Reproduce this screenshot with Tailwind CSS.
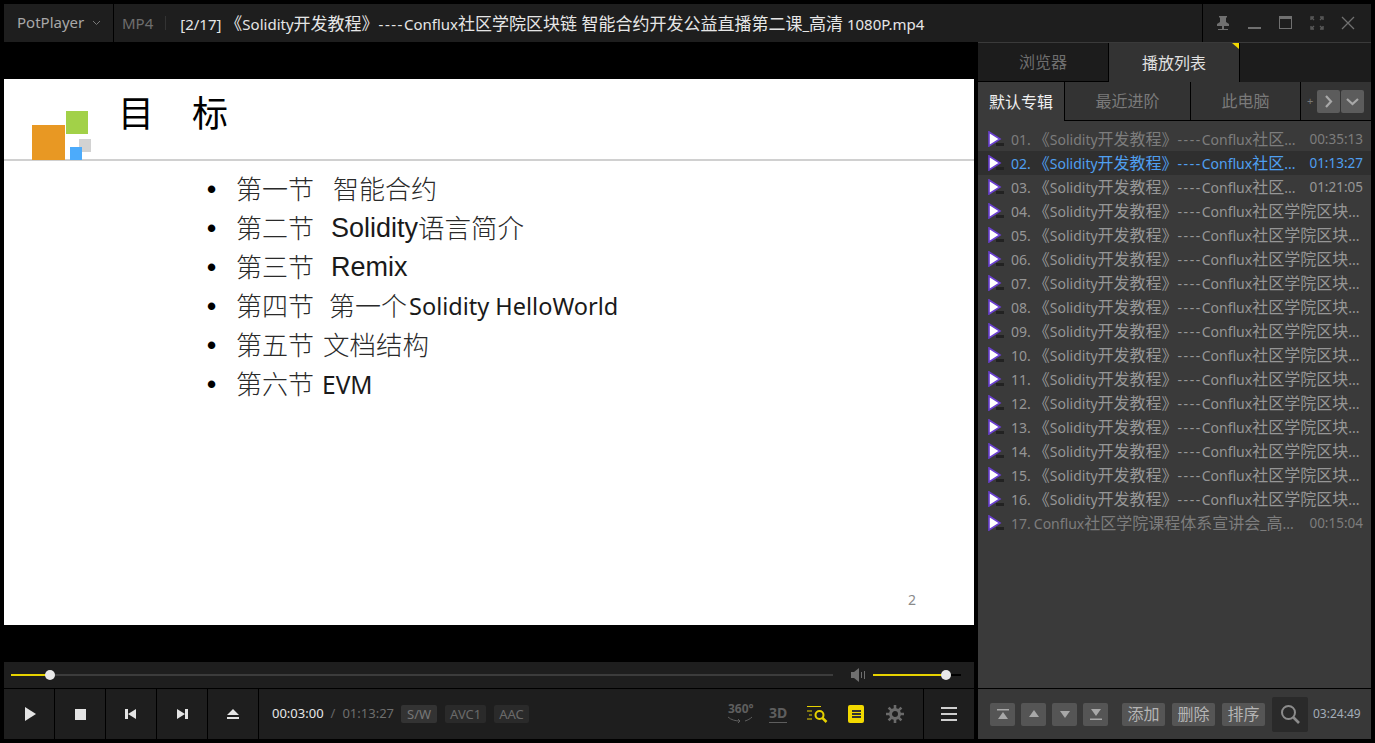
<!DOCTYPE html>
<html lang="zh-CN">
  <head>
    <meta charset="UTF-8" />
    <title>PotPlayer</title>
    <script src="https://cdn.jsdelivr.net/npm/@tailwindcss/browser@4"></script>
  </head>
  <body class="bg-black overflow-hidden font-['Noto_Sans','Noto_Sans_CJK_SC',sans-serif]">
    <div class="w-[1375px] h-[743px] bg-black p-[4px] flex flex-col">
      <!-- Title bar -->
      <header class="h-[38px] shrink-0 flex items-center bg-[#1e1e1e] w-[1367px]">
        <div class="w-[110px] h-full flex items-center pl-[13px] border-r border-black">
          <span class="mb-[2px] text-[15px] text-[#a8a8a8]">PotPlayer</span>
          <svg class="ml-[8px]" width="9" height="6" viewBox="0 0 9 6"><path d="M1 1l3.5 3.5L8 1" fill="none" stroke="#777" /></svg>
        </div>
        <span class="ml-[8px] text-[15px] text-[#6e6e6e]">MP4</span>
        <span class="ml-[12px] w-px h-[14px] bg-[#333]"></span>
        <span class="ml-[14px] mt-[2px] text-[15px] text-[#e6e6e6] whitespace-nowrap">[2/17] <span class="text-[17px]">《</span>Solidity<span class="text-[17px]">开发教程》</span><span class="tracking-[1.5px]">----</span>Conflux<span class="text-[17px]">社区学院区块链 智能合约开发公益直播第二课</span>_<span class="text-[17px]">高清</span> 1080P.mp4</span>
        <div class="ml-auto w-[169px] h-full flex items-center border-l border-black">
          <svg class="ml-[13px]" width="14" height="16" viewBox="0 0 14 16" fill="#707070"><path d="M3 1h8v1l-1 1v4l3 2v2H1V9l3-2V3L3 2zM6 11h2v3h4v1H2v-1h4z" /></svg>
          <svg class="ml-[18px]" width="14" height="16" viewBox="0 0 14 16" fill="#707070"><rect x="0" y="12" width="13" height="2" /></svg>
          <svg class="ml-[17px]" width="14" height="14" viewBox="0 0 14 14"><rect x=".5" y=".5" width="12" height="12" fill="none" stroke="#707070" /><rect x="0" y="0" width="13" height="3" fill="#707070" /></svg>
          <svg class="ml-[17px]" width="14" height="14" viewBox="0 0 14 14" fill="none" stroke="#5a5a5a" stroke-width="1.4"><path d="M1 4V1h3M10 1h3v3M13 10v3h-3M4 13H1v-3M2 2l2 2M12 2l-2 2M12 12l-2-2M2 12l2-2" /></svg>
          <svg class="ml-[17px]" width="14" height="14" viewBox="0 0 14 14" fill="none" stroke="#707070" stroke-width="1.3"><path d="M1 1l12 12M13 1L1 13" /></svg>
        </div>
      </header>

      <div class="flex h-[697px] w-[1367px]">
        <!-- Player -->
        <main class="w-[970px] shrink-0 flex flex-col">
          <div class="h-[620px] pt-[37px] bg-black">
            <div class="h-[546px] bg-white relative">
              <div class="h-[82px] border-b-2 border-[#d0d0d0] relative">
                <div class="absolute left-[28px] top-[46px] w-[33px] h-[35px] bg-[#e89823]"></div>
                <div class="absolute left-[62px] top-[32px] w-[22px] h-[23px] bg-[#a2d148]"></div>
                <div class="absolute left-[75px] top-[60px] w-[12px] h-[13px] bg-[#d2d2d2]"></div>
                <div class="absolute left-[66px] top-[68px] w-[12px] h-[13px] bg-[#4cabfb]"></div>
                <div class="absolute left-[114px] top-[9px] flex gap-[38px] text-[36px] leading-[52px] text-black"><span>目</span><span>标</span></div>
              </div>
              <ul class="pl-[203px] pt-[9px] text-[26px] leading-[39px] text-[#2a2a2a] font-light">
                <li class="flex"><span class="w-[29px] font-['Liberation_Sans'] font-bold text-black">•</span>第一节<span class="ml-[19px]">智能合约</span></li>
                <li class="flex"><span class="w-[29px] font-['Liberation_Sans'] font-bold text-black">•</span>第二节<span class="ml-[17px] font-['Liberation_Sans'] font-normal text-[27px] text-[#1a1a1a]">Solidity</span><span class="text-[26.5px]">语言简介</span></li>
                <li class="flex"><span class="w-[29px] font-['Liberation_Sans'] font-bold text-black">•</span>第三节<span class="ml-[17px] font-['Liberation_Sans'] font-normal text-[27px] text-[#1a1a1a]">Remix</span></li>
                <li class="flex"><span class="w-[29px] font-['Liberation_Sans'] font-bold text-black">•</span>第四节<span class="ml-[15px]">第一个</span><span class="ml-[2px] font-normal text-[23.5px] text-[#1a1a1a]">Solidity HelloWorld</span></li>
                <li class="flex"><span class="w-[29px] font-['Liberation_Sans'] font-bold text-black">•</span>第五节<span class="ml-[9px] text-[26.5px]">文档结构</span></li>
                <li class="flex"><span class="w-[29px] font-['Liberation_Sans'] font-bold text-black">•</span>第六节<span class="ml-[8px] font-normal text-[24.5px] text-[#1a1a1a]">EVM</span></li>
              </ul>
              <span class="absolute left-[904px] top-[510px] text-[14px] text-[#8a8a8a]">2</span>
            </div>
          </div>

          <!-- Seek bar -->
          <div class="h-[27px] bg-[#1e1e1e] flex items-center pl-[7px] pb-px border-b border-black">
            <div class="relative w-[822px] h-[2px] bg-[#3c3c3c]">
              <div class="absolute left-0 top-0 h-[2px] w-[40px] bg-[#e6d200]"></div>
              <div class="absolute left-[34px] top-[-4px] w-[10px] h-[10px] rounded-full bg-[#e8e8e8]"></div>
            </div>
            <svg class="ml-[18px]" width="15" height="14" viewBox="0 0 15 14" fill="#6f6f6f"><path d="M0 4h3l5-4v14l-5-4H0zM10 4h1v6h-1zM13 3h1v8h-1z" /></svg>
            <div class="relative ml-[7px] w-[88px] h-[2px] bg-black">
              <div class="absolute left-0 top-0 h-[2px] w-[73px] bg-[#e6d200]"></div>
              <div class="absolute left-[68px] top-[-4px] w-[10px] h-[10px] rounded-full bg-[#e8e8e8]"></div>
            </div>
          </div>

          <!-- Controls -->
          <div class="h-[50px] bg-[#1e1e1e] flex items-center">
            <div class="w-[51px] h-full flex items-center justify-center border-r border-black pl-[2px]">
              <svg width="12" height="14" viewBox="0 0 12 14" fill="#e4e4e4"><path d="M1 0l11 7-11 7z" /></svg>
            </div>
            <div class="w-[51px] h-full flex items-center justify-center border-r border-black">
              <div class="w-[11px] h-[11px] bg-[#e4e4e4]"></div>
            </div>
            <div class="w-[51px] h-full flex items-center justify-center border-r border-black">
              <svg width="12" height="12" viewBox="0 0 12 12" fill="#e4e4e4"><path d="M0 1h3v10H0zM3 6l8-5v10z" /></svg>
            </div>
            <div class="w-[51px] h-full flex items-center justify-center border-r border-black">
              <svg width="12" height="12" viewBox="0 0 12 12" fill="#e4e4e4"><path d="M12 1H9v10h3zM9 6L1 1v10z" /></svg>
            </div>
            <div class="w-[51px] h-full flex items-center justify-center border-r border-black">
              <svg width="12" height="12" viewBox="0 0 12 12" fill="#e4e4e4"><path d="M6 1l6 6H0zM0 9h12v2H0z" /></svg>
            </div>
            <span class="ml-[13px] text-[13px] text-[#e6e6e6]">00:03:00</span>
            <span class="ml-[7px] text-[13px] text-[#666]">/</span>
            <span class="ml-[7px] text-[13px] text-[#6e6e6e]">01:13:27</span>
            <span class="ml-[7px] px-[6px] h-[18px] leading-[18px] rounded-[2px] bg-[#333] text-[13px] text-[#777]">S/W</span>
            <span class="ml-[8px] px-[5px] h-[18px] leading-[18px] rounded-[2px] bg-[#2a2a2a] text-[13px] text-[#6a6a6a]">AVC1</span>
            <span class="ml-[8px] px-[5px] h-[18px] leading-[18px] rounded-[2px] bg-[#2a2a2a] text-[13px] text-[#6a6a6a]">AAC</span>
            <div class="ml-auto h-full flex items-center">
              <div class="relative w-[26px] h-[22px] mr-[16px]">
                <span class="absolute left-[1px] top-[-3px] text-[12px] font-bold text-[#5e5e5e]">360°</span>
                <svg class="absolute left-0 top-[13px]" width="26" height="9" viewBox="0 0 26 9" fill="none" stroke="#5e5e5e"><path d="M1 1c3 3 8 4 12 4l-2-2M13 5l-2 2M25 1c-2 2-4 3-7 4" /></svg>
              </div>
              <div class="w-[18px] mr-[19px] border-b border-[#5e5e5e] text-[14px] leading-[16px] font-bold text-[#5e5e5e] text-center pb-[1px]">3D</div>
              <svg class="mr-[20px]" width="22" height="18" viewBox="0 0 22 18" fill="none" stroke="#e6d200"><path d="M1 1.5h14M1 6h5M3 10h3M1 14h5" stroke-width="1.2" /><circle cx="13.5" cy="10" r="4" stroke-width="2" /><path d="M16.5 13l4 4" stroke-width="2.5" /></svg>
              <div class="w-[16px] h-[18px] mr-[22px] rounded-[2px] bg-[#f2d900] flex flex-col items-center justify-center gap-[1px]">
                <span class="w-[9px] h-[2px] bg-[#333]"></span><span class="w-[9px] h-[2px] bg-[#333]"></span><span class="w-[9px] h-[2px] bg-[#333]"></span>
              </div>
              <svg class="mr-[19px]" width="18" height="18" viewBox="0 0 18 18" fill="none" stroke="#6a6a6a"><circle cx="9" cy="9" r="4.5" stroke-width="3" /><path d="M9 0v4M9 14v4M0 9h4M14 9h4M2.6 2.6l2.8 2.8M12.6 12.6l2.8 2.8M15.4 2.6l-2.8 2.8M5.4 12.6l-2.8 2.8" stroke-width="2.6" /></svg>
              <div class="w-[51px] h-full border-l border-black flex flex-col items-center justify-center gap-[4px]">
                <span class="w-[16px] h-[2px] bg-[#cfcfcf]"></span><span class="w-[16px] h-[2px] bg-[#cfcfcf]"></span><span class="w-[16px] h-[2px] bg-[#cfcfcf]"></span>
              </div>
            </div>
          </div>
        </main>

        <!-- Side panel -->
        <aside class="ml-[4px] w-[393px] flex flex-col bg-[#3a3a3a]">
          <div class="mt-px h-[39px] shrink-0 flex bg-[#1c1c1c] text-[16px]">
            <div class="w-[131px] flex items-center justify-center border-r border-b border-black text-[#6e6e6e]">浏览器</div>
            <div class="relative w-[131px] flex items-center justify-center bg-[#333] border-r border-black text-[#e0e0e0]">
              播放列表
              <svg class="absolute right-0 top-0" width="7" height="6" viewBox="0 0 7 6" fill="#f2d900"><path d="M0 0h7v6z" /></svg>
            </div>
            <div class="flex-1"></div>
          </div>
          <div class="h-[39px] shrink-0 flex items-center bg-[#333] text-[16px]">
            <div class="w-[87px] h-full flex items-center justify-center border-r border-black bg-[#3a3a3a] text-[#f0f0f0]">默认专辑</div>
            <div class="w-[126px] h-full flex items-center justify-center border-r border-b border-black text-[#7a7a7a]">最近进阶</div>
            <div class="w-[110px] h-full flex items-center justify-center border-r border-b border-black text-[#7a7a7a]">此电脑</div>
            <div class="flex-1 h-full flex items-center border-b border-black pl-[6px]">
              <span class="text-[11px] text-[#777]">+</span>
              <div class="ml-[4px] w-[23px] h-[23px] rounded-[2px] bg-[#5c5c5c] flex items-center justify-center">
                <svg width="9" height="13" viewBox="0 0 9 13" fill="none" stroke="#a8a8a8" stroke-width="2.2"><path d="M2 1l5 5.5L2 12" /></svg>
              </div>
              <div class="ml-px w-[23px] h-[23px] rounded-[2px] bg-[#5c5c5c] flex items-center justify-center">
                <svg width="13" height="9" viewBox="0 0 13 9" fill="none" stroke="#a8a8a8" stroke-width="2.2"><path d="M1 2l5.5 5L12 2" /></svg>
              </div>
            </div>
          </div>

          <div id="list" class="flex-1 pt-[6px]"></div>

          <div class="h-px shrink-0 bg-black"></div>
          <!-- Playlist toolbar -->
          <div class="h-[50px] shrink-0 flex items-center pl-[12px] bg-[#383838]">
            <div class="w-[25px] h-[23px] rounded-[2px] bg-[#555] flex items-center justify-center">
              <svg width="12" height="11" viewBox="0 0 12 11" fill="#a8a8a8"><path d="M0 0h12v1.5H0zM6 3l5 7H1z" /></svg>
            </div>
            <div class="ml-[6px] w-[25px] h-[23px] rounded-[2px] bg-[#555] flex items-center justify-center">
              <svg width="12" height="8" viewBox="0 0 12 8" fill="#a8a8a8"><path d="M6 0l5 7H1z" /></svg>
            </div>
            <div class="ml-[6px] w-[25px] h-[23px] rounded-[2px] bg-[#555] flex items-center justify-center">
              <svg width="12" height="8" viewBox="0 0 12 8" fill="#a8a8a8"><path d="M6 8L1 1h10z" /></svg>
            </div>
            <div class="ml-[6px] w-[25px] h-[23px] rounded-[2px] bg-[#555] flex items-center justify-center">
              <svg width="12" height="11" viewBox="0 0 12 11" fill="#a8a8a8"><path d="M1 0h10L6 7zM0 9.5h12V11H0z" /></svg>
            </div>
            <div class="ml-[14px] w-[43px] h-[23px] rounded-[2px] bg-[#555] text-center text-[16px] leading-[23px] text-[#b4b4b4]">添加</div>
            <div class="ml-[7px] w-[43px] h-[23px] rounded-[2px] bg-[#555] text-center text-[16px] leading-[23px] text-[#b4b4b4]">删除</div>
            <div class="ml-[7px] w-[43px] h-[23px] rounded-[2px] bg-[#555] text-center text-[16px] leading-[23px] text-[#b4b4b4]">排序</div>
            <div class="ml-[7px] w-[36px] h-[35px] rounded-[2px] bg-[#2a2a2a] flex items-center justify-center">
              <svg width="20" height="20" viewBox="0 0 20 20" fill="none" stroke="#8c8c8c"><circle cx="8.5" cy="8.5" r="6.5" stroke-width="2" /><path d="M13 13l6 6" stroke-width="2.6" /></svg>
            </div>
            <span class="ml-[5px] text-[12px] text-[#a3adb8]">03:24:49</span>
          </div>
        </aside>
      </div>
    </div>

    <script>
      // CJK runs are set larger than the latin text in the playlist
      function wrapCjk(text) {
        return text
          .replace(/[\u3000-\u9fff]+/g, (run) => `<span class="text-[16px]">${run}</span>`)
          .replace("----", `<span class="tracking-[1.5px]">----</span>`);
      }

      const base = "《Solidity开发教程》----Conflux社区";
      const rows = [
        { n: "01.", t: base + "...", time: "00:35:13", cls: "text-[#7d7d7d]" },
        { n: "02.", t: base + "...", time: "01:13:27", cls: "text-[#4f9ff0] bg-[#2f2f2f]" },
        { n: "03.", t: base + "...", time: "01:21:05", cls: "text-[#969696]" },
      ];
      for (let i = 4; i <= 16; i++) {
        rows.push({ n: String(i).padStart(2, "0") + ".", t: base + "学院区块...", time: "", cls: "text-[#969696]" });
      }
      rows.push({ n: "17.", t: "Conflux社区学院课程体系宣讲会_高...", time: "00:15:04", cls: "text-[#7d7d7d]" });

      document.getElementById("list").innerHTML = rows
        .map(
          (row) => `
          <div class="h-[24px] flex items-center pl-[10px] pr-[8px] text-[14px] whitespace-nowrap ${row.cls}">
            <svg width="16" height="16" viewBox="0 0 16 16" class="shrink-0">
              <path d="M1 1l11 7-11 7z" fill="#fff" stroke="#6a3fd0" stroke-width="1.6" />
              <rect x="8" y="12" width="8" height="3" fill="#222" />
            </svg>
            <span class="ml-[7px]">${row.n}</span>
            <span class="ml-[3px]">${wrapCjk(row.t)}</span>
            <span class="ml-auto text-[13.5px]">${row.time}</span>
          </div>`
        )
        .join("");
    </script>
  </body>
</html>
